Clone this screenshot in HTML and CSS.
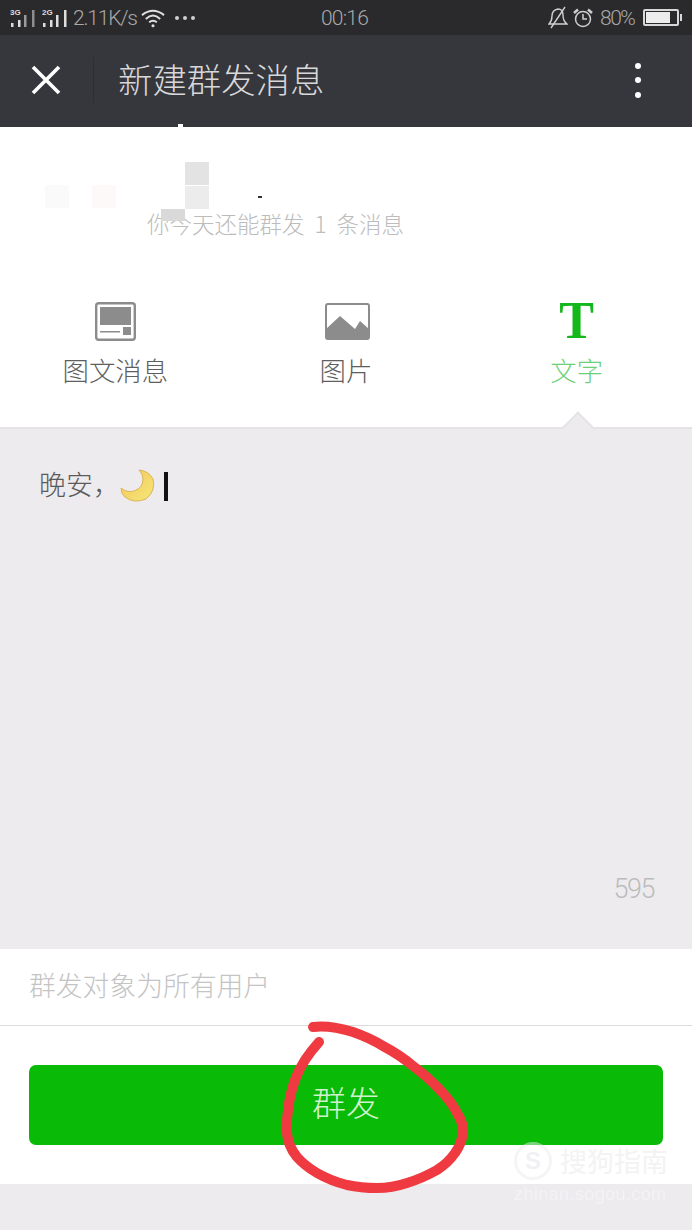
FILE: index.html

```html
<!DOCTYPE html>
<html lang="zh-CN">
  <head>
    <meta charset="UTF-8">
    <meta name="viewport" content="width=device-width, initial-scale=1">
    <link rel="stylesheet" href="styles.css">
    <title>新建群发消息</title>
  </head>
  <body>
    <div id="page">
      <div class="status-bar">
        <div class="status-left">
          <svg class="signal" width="26" height="22" viewBox="0 0 26 22">
            <text x="0" y="8" class="net-label">3G</text>
            <rect x="1" y="16" width="2.500" height="4" fill="#ddd"/>
            <rect x="8" y="13" width="2.500" height="7" fill="#ddd"/>
            <rect x="14" y="8" width="2.500" height="12" fill="#9a9a9a"/>
            <rect x="22" y="3" width="2.500" height="17" fill="#8d8d8d"/>
          </svg>
          <svg class="signal" width="26" height="22" viewBox="0 0 26 22">
            <text x="0" y="8" class="net-label">2G</text>
            <rect x="1" y="16" width="2.500" height="4" fill="#ddd"/>
            <rect x="8" y="13" width="2.500" height="7" fill="#ddd"/>
            <rect x="14" y="8" width="2.500" height="12" fill="#ddd"/>
            <rect x="22" y="3" width="2.500" height="17" fill="#ddd"/>
          </svg>
          <span class="net-speed">2.11K/s</span>
          <svg class="wifi" width="24" height="20" viewBox="0 0 25 20" fill="none" stroke="#e0e0e0" stroke-width="2">
            <path d="M1 7 Q12.500 -2 24 7"/>
            <path d="M5 11 Q12.500 4 20 11"/>
            <path d="M8.500 14.500 Q12.500 11 16.500 14.500"/>
            <circle cx="12.500" cy="18" r="1.600" fill="#e0e0e0" stroke="none"/>
          </svg>
          <div class="more-dots"><i></i><i></i><i></i></div>
        </div>
        <span class="clock">00:16</span>
        <div class="status-right">
          <svg width="20" height="23" viewBox="0 0 20 23" fill="none" stroke="#cfcfcf" stroke-width="1.400">
            <path d="M1 18 Q4 15 4 10 Q4 4 10 3 Q15 3 15 9 Q15 15 19 18 Z"/>
            <path d="M3 22 L17 1"/>
          </svg>
          <svg width="20" height="20" viewBox="0 0 20 20" fill="none" stroke="#cfcfcf" stroke-width="1.500">
            <circle cx="10" cy="11" r="7.500"/>
            <path d="M10 6 V11 H14"/>
            <path d="M1 5 L5 1.500 M19 5 L15 1.500" stroke-width="2.500"/>
          </svg>
          <span class="battery-pct">80%</span>
          <div class="battery"><div class="battery-fill"></div></div>
        </div>
      </div>

      <div class="toolbar">
        <svg class="close-icon" width="30" height="30" viewBox="0 0 30 30" stroke="#fff" stroke-width="3.600">
          <path d="M2 2 L28 28 M28 2 L2 28"/>
        </svg>
        <div class="toolbar-sep"></div>
        <h1 class="toolbar-title">新建群发消息</h1>
        <div class="menu-dots"><i></i><i></i><i></i></div>
      </div>

      <div class="compose-head">
        <p class="quota">你今天还能群发 1 条消息</p>
        <div class="tabs">
          <div class="tab">
            <svg class="tab-icon icon-news" width="41" height="39" viewBox="0 0 41 39" fill="#8c8c8c">
              <rect x="1.200" y="1.200" width="38.600" height="36.600" rx="2.500" fill="none" stroke="#8c8c8c" stroke-width="2.400"/>
              <rect x="5" y="5" width="31" height="18"/>
              <rect x="5" y="29" width="20" height="1.500"/>
              <rect x="28" y="25" width="8" height="8"/>
            </svg>
            <span class="tab-label">图文消息</span>
          </div>
          <div class="tab">
            <svg class="tab-icon icon-image" width="45" height="37" viewBox="0 0 45 37">
              <rect x="1" y="1" width="43" height="35" rx="2" fill="none" stroke="#8c8c8c" stroke-width="2"/>
              <path d="M1 26 L15 13 L30 26 L35 18 L44 26 V34 Q44 36 42 36 H3 Q1 36 1 34 Z" fill="#8c8c8c"/>
            </svg>
            <span class="tab-label">图片</span>
          </div>
          <div class="tab tab-active">
            <span class="tab-t">T</span>
            <span class="tab-label">文字</span>
          </div>
        </div>
      </div>

      <div class="editor">
        <div class="editor-line">
          <span>晚安，</span>
          <svg class="moon" width="36" height="34" viewBox="0 0 36 34">
            <defs>
              <linearGradient id="moon-fill" x1="0" y1="0" x2="1" y2="1">
                <stop offset="0" stop-color="#f3c45c"/>
                <stop offset="1" stop-color="#f5e878"/>
              </linearGradient>
            </defs>
            <path d="M19 1 Q29 2 33 10 Q36 22 26 30 Q14 35 5 28 Q1 25 1 19 Q7 24 14 22 Q23 19 23 10 Q23 5 19 1 Z" fill="url(#moon-fill)" stroke="#dcb552" stroke-width="1"/>
          </svg>
          <i class="caret"></i>
        </div>
        <span class="char-count">595</span>
      </div>

      <div class="target-row">群发对象为所有用户</div>

      <div class="send-row">
        <div class="send-btn">群发</div>
      </div>

      <div class="nav-space"></div>

      <!-- mosaic over the account name -->
      <i class="blur-block b1"></i>
      <i class="blur-block b2"></i>
      <i class="blur-block b3"></i>
      <i class="blur-block b4"></i>
      <i class="blur-block b5"></i>
      <i class="blur-speck s1"></i>
      <i class="blur-speck s2"></i>

      <svg class="marker" width="692" height="1230" viewBox="0 0 692 1230" fill="none">
        <path d="M313 1027 Q330 1025 353 1032 Q370 1038 383 1046 Q400 1055 413 1066 Q428 1077 440 1090 Q451 1101 457 1113 Q464 1124 463 1133 Q461 1145 455 1153 Q448 1163 437 1170 Q423 1178 407 1183 Q392 1188 377 1188 Q361 1188 347 1185 Q331 1181 317 1173 Q305 1166 297 1157 Q288 1146 287 1133 Q286 1122 288 1110 Q290 1094 295 1080 Q299 1069 305 1060 Q311 1051 319 1042" stroke="#ee3a40" stroke-width="10" stroke-linecap="round"/>
      </svg>

      <div class="watermark">
        <div class="wm-top">
          <span class="wm-logo">S</span>
          <span class="wm-name">搜狗指南</span>
        </div>
        <span class="wm-url">zhinan.sogou.com</span>
      </div>
    </div>
  </body>
</html>
```

FILE: styles.css

```css
* {
  box-sizing: border-box;
}

body {
  margin: 0;
  background: #edebee;
  font-family: "Noto Sans CJK SC", "Noto Sans", sans-serif;
  font-weight: 300;
}

#page {
  position: relative;
  width: 692px;
  height: 1230px;
  overflow: hidden;
  display: flex;
  flex-direction: column;
}

/* status bar */
.status-bar {
  height: 35px;
  padding: 0 13px 0 10px;
  background: #2a2a2c;
  color: #a9a9a9;
  font-family: Roboto, sans-serif;
  font-weight: 300;
  font-size: 21px;
  display: grid;
  grid-template-columns: 1fr auto 1fr;
  align-items: center;
}

.status-left, .status-right {
  display: flex;
  align-items: center;
}

.status-right {
  justify-content: flex-end;
}

.signal {
  margin-right: 6px;
}

.net-label {
  font-family: "Liberation Sans", sans-serif;
  font-size: 8px;
  font-weight: bold;
  fill: #ddd;
}

.net-speed {
  margin-left: -1px;
  width: 64px;
  letter-spacing: -1.200px;
  white-space: nowrap;
}

.wifi {
  margin-left: 4px;
}

.more-dots {
  margin-left: 10px;
  display: flex;
  gap: 4px;
}

.more-dots i {
  width: 4px;
  height: 4px;
  border-radius: 50%;
  background: #cfcfcf;
}

.clock {
  letter-spacing: -0.800px;
}

.status-right svg {
  margin-right: 5px;
}

.battery-pct {
  margin-left: 2px;
  width: 36px;
  letter-spacing: -1.500px;
  white-space: nowrap;
}

.battery {
  position: relative;
  margin-left: 7px;
  width: 36px;
  height: 17px;
  border: 2px solid #d8d8d8;
  border-radius: 2px;
  padding: 1px;
}

.battery::after {
  content: "";
  position: absolute;
  right: -5px;
  top: 3px;
  width: 2px;
  height: 7px;
  background: #d8d8d8;
}

.battery-fill {
  width: 80%;
  height: 100%;
  background: #ececec;
}

/* toolbar */
.toolbar {
  height: 92px;
  background: #36373c;
  display: flex;
  align-items: center;
  padding-bottom: 2px;
}

.close-icon {
  margin-left: 31px;
}

.toolbar-sep {
  margin-left: 32px;
  width: 1px;
  height: 46px;
  background: #2e2f33;
}

.toolbar-title {
  margin: 0 0 4px 24px;
  color: #d8d8da;
  font-size: 34.400px;
  font-weight: 300;
  line-height: 46px;
}

.menu-dots {
  margin-left: auto;
  margin-right: 51px;
  display: flex;
  flex-direction: column;
  gap: 8.500px;
}

.menu-dots i {
  width: 6px;
  height: 6px;
  border-radius: 50%;
  background: #fff;
}

/* message type tabs */
.compose-head {
  height: 302px;
  background: #fff;
  border-bottom: 2px solid #e4e4e6;
  position: relative;
}

.quota {
  margin: 80px 0 0 147px;
  color: #bcbcbc;
  font-size: 22.500px;
  word-spacing: 5px;
  line-height: 32px;
}

.tabs {
  margin-top: 62px;
  display: grid;
  grid-template-columns: repeat(3, 1fr);
}

.tab {
  height: 96px;
  display: flex;
  flex-direction: column;
  align-items: center;
}

.tab-icon {
  margin-top: 1px;
  height: 39px;
}

.icon-news {
  margin-left: 1px;
}

.icon-image {
  margin-left: 3px;
}

.tab-label {
  margin-top: 10px;
  color: #5e5e5e;
  font-size: 26.400px;
  line-height: 38px;
}

.tab-t {
  height: 40px;
  margin-top: -5px;
  color: #14b81a;
  font-family: "Liberation Serif", serif;
  font-weight: bold;
  font-size: 52px;
  line-height: 50px;
}

.tab-active .tab-label {
  margin-top: 15px;
  color: #6fd078;
}

/* pointer under the active tab */
.tab-active::after {
  content: "";
  position: absolute;
  left: 567px;
  bottom: -11px;
  width: 20px;
  height: 20px;
  background: #edebee;
  border-top: 2px solid #e4e4e6;
  border-left: 2px solid #e4e4e6;
  transform: rotate(45deg);
}

/* editor */
.editor {
  height: 520px;
  background: #edebee;
  position: relative;
  padding: 39px 39px 0;
}

.editor-line {
  display: flex;
  align-items: center;
  height: 36px;
  color: #5a5a5a;
  font-size: 27px;
  line-height: 30px;
}

.editor-line span {
  margin-top: -5px;
}

.moon {
  margin-left: 0;
}

.caret {
  margin-left: 8px;
  width: 4px;
  height: 29px;
  background: #111;
}

.char-count {
  position: absolute;
  right: 38px;
  bottom: 44px;
  color: #bcbcbc;
  font-family: Roboto, sans-serif;
  font-weight: 300;
  font-size: 27px;
  letter-spacing: -1.500px;
}

.target-row {
  height: 77px;
  padding: 0 29px 5px;
  background: #fff;
  border-bottom: 1px solid #dcdcdc;
  color: #c4c4c4;
  font-size: 26.800px;
  display: flex;
  align-items: center;
}

.send-row {
  height: 158px;
  padding: 39px 29px 0;
  background: #fff;
}

.send-btn {
  height: 80px;
  padding-bottom: 7px;
  border-radius: 7px;
  background: #09bb07;
  color: #d2f2ce;
  font-size: 34px;
  display: flex;
  align-items: center;
  justify-content: center;
}

.nav-space {
  flex: 1;
  background: #edebee;
}

/* overlays */
.blur-block {
  position: absolute;
  width: 24px;
  height: 23px;
}

.b1 { left: 185px; top: 162px; background: #e3e3e3; }
.b2 { left: 185px; top: 186px; background: #ececec; }
.b3 { left: 161px; top: 209px; height: 12px; background: #d9d9d9; }
.b4 { left: 45px; top: 185px; background: #fafafa; }
.b5 { left: 92px; top: 185px; background: #fdf9f9; }

.blur-speck {
  position: absolute;
  background: #333;
}

.s1 { left: 258px; top: 196px; width: 4px; height: 2px; }
.s2 { left: 178px; top: 124px; width: 5px; height: 3px; background: #fff; }

.marker {
  position: absolute;
  left: 0;
  top: 0;
}

.watermark {
  position: absolute;
  left: 514px;
  top: 1142px;
  width: 156px;
  color: rgba(255, 255, 255, 0.4);
  display: flex;
  flex-direction: column;
}

.wm-top {
  display: flex;
  align-items: center;
}

.wm-logo {
  width: 38px;
  height: 38px;
  border: 3px solid rgba(236, 235, 238, 0.5);
  border-radius: 50%;
  color: rgba(236, 235, 238, 0.7);
  font-family: "Liberation Sans", sans-serif;
  font-weight: bold;
  font-size: 24px;
  line-height: 32px;
  text-align: center;
}

.wm-name {
  margin-left: 8px;
  color: #f3f3f3;
  font-size: 27px;
  font-weight: 400;
  line-height: 38px;
  white-space: nowrap;
}

.wm-url {
  margin-top: 4px;
  font-family: "Liberation Sans", sans-serif;
  font-size: 18px;
  letter-spacing: 0.4px;
  white-space: nowrap;
}
```
